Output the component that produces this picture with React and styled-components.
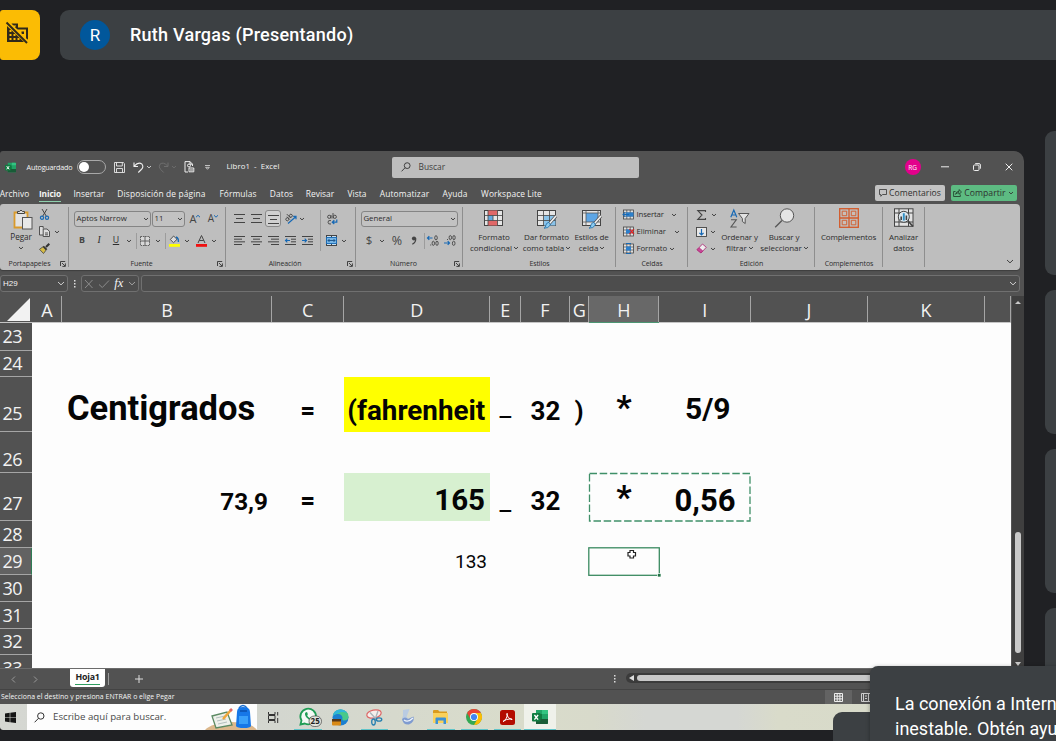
import React from "react";
import styled, { createGlobalStyle } from "styled-components";

const Global = createGlobalStyle`
  * { box-sizing: border-box; }
  html, body { margin: 0; height: 100%; overflow: hidden; background: #202124; }
  body { font-family: "Open Sans", "Noto Sans", sans-serif; }
  svg { display: block; flex: none; overflow: visible; }
`;

/* ---------- meeting shell ---------- */
const Meeting = styled.div`
  position: relative;
  width: 1056px; height: 741px; overflow: hidden;
  display: flex; flex-direction: column;
  padding-top: 10px;
  background: #202124;
`;
const MeetingHeader = styled.header`
  display: flex; gap: 20px; height: 50px; flex: none;
`;
const Warning = styled.div`
  width: 40px; height: 50px; border-radius: 3px 8px 8px 3px; background: #fbbc04;
  display: flex; align-items: flex-start; padding: 10px 0 0 5px;
`;
const Presenter = styled.div`
  flex: 1; display: flex; align-items: center; padding-left: 20px;
  background: #3c4043; border-radius: 9px 0 0 9px; color: #fff;
  font: 500 18px/24px Roboto, sans-serif;
`;
const Avatar = styled.span`
  width: 30px; height: 30px; border-radius: 50%; margin-right: 20px;
  background: #01579b; display: flex; align-items: center; justify-content: center;
  font: 400 17px/30px Roboto, sans-serif;
`;
const PresenterName = styled.span`letter-spacing: 0.24px; white-space: nowrap;`;
const Stage = styled.main`display: flex; padding-top: 91px; flex: none;`;
const Tiles = styled.aside`
  display: flex; flex-direction: column; gap: 15px; margin: -20px 0 0 21px;
  width: 11px; flex: none; height: 600px;
`;
const Tile = styled.div`
  height: 144px; flex: none; width: 30px; background: #3c4043; border-radius: 9px 0 0 9px;
`;
const Toast = styled.div`
  position: absolute; left: 870px; top: 666px; width: 220px; height: 90px;
  background: #3c4043; border-radius: 8px; color: #fff; padding: 25px 0 0 25px;
  font: 400 18px/25px Roboto, sans-serif; white-space: nowrap;
  box-shadow: 0 1px 4px rgba(0,0,0,.35);
`;
const Bubble = styled.div`
  position: absolute; left: 833px; top: 712px; width: 80px; height: 50px;
  background: #3c4043; border-radius: 9px;
`;

/* ---------- excel window ---------- */
const Excel = styled.section`
  width: 1024px; height: 579px; flex: none; overflow: hidden;
  border-radius: 3px 10px 0 3px; background: #525252; color: #f4f4f4;
  display: flex; flex-direction: column;
`;
const Txt = styled.span`
  white-space: nowrap; font-size: ${p => p.$s || 8}px; line-height: 1.25;
  letter-spacing: ${p => p.$ls || 0}px; font-weight: ${p => p.$wt || 400};
  color: ${p => p.$c || "inherit"}; font-family: ${p => p.$f || "inherit"};
  font-style: ${p => p.$i ? "italic" : "normal"};
  text-decoration: ${p => p.$u ? "underline" : "none"};
`;
const Slot = styled.div`
  width: ${p => p.$w}px; margin-left: ${p => p.$ml || 0}px; flex: none;
  display: flex; align-items: center; white-space: nowrap;
  justify-content: ${p => p.$start ? "flex-start" : "center"};
`;
const TitleBar = styled.div`display: flex; align-items: center; height: 32px; flex: none;`;
const Toggle = styled.span`
  width: 29px; height: 14px; border: 1px solid #a8a8a8; border-radius: 7px; padding: 1px;
  display: flex; align-items: center; margin-left: 4.5px; flex: none;
  &::before { content: ""; width: 10px; height: 10px; border-radius: 50%; background: #fff; }
`;
const Search = styled.div`
  width: 247px; height: 21px; margin-left: 111.5px; background: #bdbdbd; border-radius: 2px;
  display: flex; align-items: center; gap: 8px; padding-left: 9px; color: #3d3d3d; flex: none;
`;
const UserDot = styled.span`
  width: 16px; height: 16px; border-radius: 50%; background: #e3008c; color: #fff;
  margin-left: 266px; font-size: 6.5px; display: flex; align-items: center; justify-content: center; flex: none;
`;
const Menu = styled.nav`display: flex; height: 21px; flex: none;`;
const MenuItem = styled.div`
  width: ${p => p.$w}px; margin-left: ${p => p.$ml}px; flex: none; height: 19px;
  display: flex; justify-content: center; white-space: nowrap;
  font-size: 8.4px; line-height: 21px; letter-spacing: ${p => p.$ls || 0}px;
  font-weight: ${p => p.$on ? 700 : 500};
  border-bottom: ${p => p.$on ? "1.5px solid #8fd0ae" : "0"};
`;
const MenuButton = styled.div`
  width: ${p => p.$w}px; height: 16px; margin: 2px 0 0 ${p => p.$ml}px; border-radius: 2px;
  background: ${p => p.$bg}; color: #2f2f2f; display: flex; align-items: center; justify-content: center; gap: 2px; flex: none;
`;
const Ribbon = styled.div`
  display: flex; width: 1020px; height: 66px; flex: none; background: #bebebe; color: #2d2d2d;
  border-radius: 3px 4px 4px 3px; box-shadow: 0 1px 1px #3d3d3d;
`;
const Group = styled.div`
  position: relative; width: ${p => p.$w}px; flex: none; display: flex; flex-direction: column;
  &::after {
    content: ""; position: absolute; right: 0; top: 3px; bottom: 3px; width: 1px; background: #8e8e8e;
  }
`;
const GroupBody = styled.div`height: 53px; display: flex; flex: none;`;
const GroupFoot = styled.div`
  height: 13px; display: flex; align-items: center; justify-content: center;
  padding-right: ${p => p.$pr || 0}px; font-size: 7px; line-height: 13px; letter-spacing: ${p => p.$ls || 0}px; white-space: nowrap;
`;
const Launcher = styled.span`position: absolute; right: 3px; bottom: 3px;`;
const Collapse = styled.span`
  flex: 1; display: flex; align-items: flex-end; justify-content: flex-end; padding: 0 7px 7px 0;
`;
const Stack = styled.div`
  display: flex; flex-direction: column; flex: none; width: ${p => p.$w}px;
  padding-top: ${p => p.$pt || 0}px; align-items: ${p => p.$start ? "flex-start" : "center"};
`;
const Row = styled.div`
  display: flex; align-items: center; flex: none; height: ${p => p.$h || 17}px;
  padding-left: ${p => p.$pl || 0}px; margin-bottom: ${p => p.$mb || 0}px;
`;
const Combo = styled.div`
  width: ${p => p.$w}px; height: 16px; border: 1px solid #858585; border-radius: 3px; flex: none;
  display: flex; align-items: center; justify-content: space-between; padding: 0 2px 0 1.5px;
  margin-right: ${p => p.$mr || 0}px; background: #c2c2c2;
`;
const Pressed = styled.span`
  width: 16px; height: 17px; border: 1px solid #8a8a8a; border-radius: 3px; background: #d0d0d0;
  display: flex; align-items: center; justify-content: center; padding-top: 2px;
`;
const Rule = styled.span`width: 1px; height: ${p => p.$h || 16}px; background: #9c9c9c; flex: none;`;
const Caption = styled.div`
  display: flex; align-items: center; justify-content: center; gap: 2px; height: 10.5px;
  font-size: 8px; line-height: 10.5px; letter-spacing: ${p => p.$ls || 0}px; white-space: nowrap;
`;
const IconBox = styled.div`height: 28px; display: flex; align-items: center;`;

const FormulaBar = styled.div`
  display: flex; align-items: center; height: 26px; flex: none; padding-top: 1px;
`;
const Field = styled.div`
  width: ${p => p.$w}px; height: 17px; border: 1px solid #707070; border-radius: 3px; flex: none;
  margin-left: ${p => p.$ml || 0}px; padding: 0 3px 0 2px; background: #4d4d4d;
  display: flex; align-items: center; justify-content: space-between;
`;

/* ---------- sheet ---------- */
const COLS = "32px 30px 210px 71.5px 146.5px 30.5px 49px 19.5px 70px 91.5px 117px 117px 26.5px";
const Sheet = styled.div`display: flex; height: 372px; flex: none;`;
const SheetMain = styled.div`width: 1011px; flex: none; position: relative; overflow: hidden; background: #fdfdfd;`;
const ColHeads = styled.div`
  display: grid; grid-template-columns: ${COLS}; height: 27px; background: #525252;
  border-bottom: 1px solid #c5c5c5;
`;
const ColHead = styled.div`
  display: flex; align-items: center; justify-content: center; padding: 1px 0 0 1px;
  font: 400 18px/22px "Open Sans", sans-serif; color: #f2f2f2;
  border-right: 1px solid #a5a5a5;
  ${p => p.$on && "background: #686868; box-shadow: 0 1px 0 #4c9673;"}
`;
const Corner = styled.div`display: flex; justify-content: flex-end; align-items: flex-end; padding: 0 2px 1px 0;`;
const Line = styled.div`display: grid; grid-template-columns: ${COLS}; height: ${p => p.$h}px;`;
const RowHead = styled.div`
  background: ${p => p.$on ? "#626262" : "#525252"}; border-bottom: 1px solid #a5a5a5;
  ${p => p.$on && "border-right: 1px solid #2f7c55;"}
  display: flex; align-items: flex-end; padding: 0 0 ${p => p.$pb ?? 0}px 2.5px; overflow: hidden;
  font: 400 18px/25px "Open Sans", sans-serif; letter-spacing: -0.5px; color: #f2f2f2;
`;
const Cell = styled.div`
  grid-column: ${p => p.$col}; grid-row: 1; display: flex; align-items: flex-end; white-space: nowrap;
  justify-content: ${p => p.$end ? "flex-end" : p.$start ? "flex-start" : "center"};
  background: ${p => p.$bg || "transparent"}; color: #050505;
  padding: 0 ${p => p.$pr || 0}px ${p => p.$b - p.$s * 0.158}px ${p => p.$pl || 0}px;
  font: ${p => p.$n ? 400 : 700} ${p => p.$s}px/1 Roboto, sans-serif;
`;
const Overlay = styled.svg`position: absolute; left: ${p => p.$x}px; top: ${p => p.$y}px;`;
const VScroll = styled.div`
  width: 13px; background: #3f3f3f; display: flex; flex-direction: column; align-items: center;
  padding: 4px 0 2px; gap: 9px; flex: none; border-left: 1px solid #555;
`;
const Thumb = styled.span`width: 6px; height: 121px; border-radius: 3px; background: #c8c8c8; margin-top: auto;`;

const SheetTabs = styled.div`display: flex; height: 21px; flex: none; border-top: 1px solid #6b6b6b; align-items: flex-start;`;
const SheetTab = styled.div`
  width: 35px; height: 18px; margin-left: 28px; background: #fff; border-radius: 0 0 3px 3px; color: #222;
  display: flex; justify-content: center; font: 700 8.8px/17px "Open Sans", sans-serif; letter-spacing: -0.2px;
`;
const TabName = styled.span`height: 16px; border-bottom: 1.5px solid #2f9e60;`;
const HScroll = styled.div`
  flex: 1; height: 10px; margin: 4px 0 0 10px; background: #3b3b3b; border-radius: 5px 0 0 5px;
  display: flex; align-items: center; gap: 3px; padding-left: 3px;
`;
const HThumb = styled.span`flex: 1; height: 6px; border-radius: 3px; background: #c8c8c8;`;
const Status = styled.div`
  display: flex; height: 15px; flex: none; align-items: center; padding-left: 1px; border-top: 1px solid #434343;
`;
const ViewBtn = styled.span`
  width: 27px; height: 14px; background: ${p => p.$on ? "#636363" : "transparent"};
  display: flex; align-items: center; justify-content: center;
`;
const Taskbar = styled.footer`
  display: flex; height: 26px; flex: none; background: linear-gradient(90deg, #d5d7d2 0, #d3d6cf 27%, #d9dccb 50%, #d8dacb 58%, #d5d7d3 63%, #d5d7d3 72%, #d9dbca 76%, #d6d9c9 100%);
  border-radius: 0 0 0 3px;
`;
const TaskSearch = styled.div`
  width: 230px; background: #fdfdfd; display: flex; align-items: center; padding-left: 7px; color: #4a4a4a;
`;
const TaskApp = styled.div`
  width: ${p => p.$w}px; flex: none; display: flex; align-items: center; justify-content: center;
  background: ${p => p.$active ? "#eff1ea" : "transparent"};
  box-shadow: ${p => p.$run ? "inset 0 -1px 0 #5fc4c9" : "none"};
  margin-left: ${p => p.$ml || 0}px;
`;

/* ---------- icons ---------- */
const Chev = ({ w = 4, c = "#333", sw = 0.9 }) => (
  <svg width={w} height={w / 2} viewBox="0 0 4 2"><path d="M0 0L2 1.9L4 0" fill="none" stroke={c} strokeWidth={sw * 4 / w} /></svg>
);
const Dots = () => (
  <svg width="2" height="8" fill="#ddd"><path d="M0 0h1.5v1.5H0zM0 3h1.5v1.5H0zM0 6h1.5v1.5H0z" /></svg>
);
const SearchIcon = ({ s = 11, c = "#333" }) => (
  <svg width={s} height={s} viewBox="0 0 11 11" fill="none" stroke={c}><circle cx="6.8" cy="4" r="3.2" /><path d="M4.5 6.3L.6 10.3" /></svg>
);
const ExcelIcon = ({ s = 12 }) => (
  <svg width={s} height={s} viewBox="0 0 16 16">
    <path d="M4 1h11q1 0 1 1v12q0 1-1 1H4z" fill="#21a366" /><path d="M10 1h5q1 0 1 1v3h-6z" fill="#33c481" />
    <path d="M4 5h6v5H4z" fill="#107c41" /><path d="M4 10h12v4q0 1-1 1H4z" fill="#185c37" /><path d="M10 5h6v5h-6z" fill="#21a366" />
    <rect y="4" width="8.5" height="8.5" rx="1" fill="#107c41" /><path d="M2.4 6l3.7 4.6M6.1 6L2.4 10.6" stroke="#fff" strokeWidth="1.4" />
  </svg>
);
const Lines = ({ xs }) => (
  <svg width="11" height="9" viewBox="0 0 11 9" stroke="#444" strokeWidth="1">
    {xs.map(([a, b], i) => <path key={i} d={`M${a} ${i * (8 / (xs.length - 1)) + 0.5}H${b}`} />)}
  </svg>
);
const Indent = ({ right }) => (
  <svg width="11" height="9" viewBox="0 0 11 9" stroke="#444" fill="none">
    <path d="M0 .5H11M6 3.2H11M6 5.8H11M0 8.5H11" />
    <path d={right ? "M0 4.5H4.5M2.7 2.7L4.5 4.5L2.7 6.3" : "M5 4.5H.5M2.3 2.7L.5 4.5L2.3 6.3"} stroke="#1769b5" strokeWidth="1.1" />
  </svg>
);
const Launch = () => (
  <svg width="6" height="6" viewBox="0 0 6 6" fill="none" stroke="#333" strokeWidth=".9"><path d="M.5 5V.5H5.2M2 2L5 5M5.4 2.4V5.4H2.4" /></svg>
);
const Table = ({ kind }) => (
  <svg width="20" height="18" viewBox="0 0 20 18" fill="none">
    <rect x=".5" y="1.5" width="18" height="15" fill="#e5e5e5" stroke="#444" />
    {kind === "cond" && <g><path d="M4 1.5h9.5v5H4zM4 11.5h9.5v5H4z" fill="#e06767" /><path d="M4 6.5h5v5H4z" fill="#63a9df" /></g>}
    {kind === "table" && <path d="M7 6.5h11.5v10H7z" fill="#8ac3ea" />}
    {kind === "style" && <path d="M4 4h12v9H4z" fill="#5da5e4" />}
    {kind === "style"
      ? <path d="M4 1.5v15M.5 4H18.5M.5 13H18.5M16 1.5V13" stroke="#555" strokeWidth=".8" />
      : <path d={kind === "cond" ? "M4 1.5v15M9 6.5v5M13.5 1.5v15M.5 6.5h18M.5 11.5h18" : "M6.5 1.5v15M12.5 1.5v15M.5 6.5h18M.5 11.5h18"} stroke="#444" strokeWidth=".8" />}
    {kind !== "cond" && <g><path d="M19 7L12 15" stroke="#555" strokeWidth="3" /><path d="M19 7L12.5 14.5" stroke="#f2f2f2" strokeWidth="1.6" />
      <path d="M11.5 13.5q2 .5 1.8 2.5q-2 3.5-6.3 3.2q2-1 1.8-2.8q.4-2.5 2.7-2.9z" fill="#8ccbf0" stroke="#1c6ca8" strokeWidth=".8" /></g>}
  </svg>
);
const CellsIcon = ({ kind }) => (
  <svg width="11" height="11" viewBox="0 0 11 11" fill="none">
    <rect x=".5" y="1" width="10" height="9" fill="#e0e0e0" stroke="#444" strokeWidth=".8" />
    <path d="M3.8 1v9M7.2 1v9M.5 4h10M.5 7h10" stroke="#444" strokeWidth=".7" />
    <rect x="3" y="3.4" width={kind === "ins" ? 7.5 : 5} height="4.2" fill="#2c7fcb" />
    {kind === "ins" && <path d="M6 5.5H0M2.3 3L0 5.5L2.3 8" stroke="#1769b5" strokeWidth="1.1" />}
    {kind === "del" && <path d="M6.5 3.2L11 8M11 3.2L6.5 8" stroke="#d22" strokeWidth="1.2" />}
    {kind === "fmt" && <path d="M3 .5h5M3 10.5h5" stroke="#1769b5" />}
  </svg>
);
const OffIcon = () => (
  <svg width="23" height="24" viewBox="0 0 23 24">
    <path d="M6.5 4.5H12V8.5H22V19.5" fill="none" stroke="#30291a" strokeWidth="2" />
    <path d="M2 6L19 22H2z" fill="#30291a" />
    <g fill="#fbbc04"><path d="M4.5 10h2v2h-2zM4.5 14h2v2h-2zM8.5 14h2v2h-2zM4.5 18h2v2h-2zM8.5 18h2v2h-2zM12.5 18h2v2h-2z" /></g>
    <path d="M11 6.5V10" stroke="#30291a" strokeWidth="2" /><path d="M16.5 11.5h2.5v2.5h-2.5z" fill="#30291a" />
    <path d="M3 1.5L23.5 22" stroke="#fbbc04" strokeWidth="1.8" /><path d="M1.5 2.5L22 23" stroke="#30291a" strokeWidth="2" />
  </svg>
);

const MENU = [
  ["Archivo", 30, -0.5, 0.05], ["Inicio", 22, 9.5, -0.15, true], ["Insertar", 32, 12, 0.05], ["Disposición de página", 90, 11.5, 0.15],
  ["Fórmulas", 38, 12.5, 0.1], ["Datos", 24, 12.5, 0.15], ["Revisar", 29, 12, 0.05], ["Vista", 19, 13, 0.1],
  ["Automatizar", 50, 13, 0.15], ["Ayuda", 25, 13, 0.1], ["Workspace Lite", 61, 13.5, 0.1],
];
const full = [[0, 11], [2, 9], [0, 11]];

function TitleRow() {
  return (
    <TitleBar>
      <Slot $w={11} $ml={5}><ExcelIcon s={11} /></Slot>
      <Slot $w={46} $ml={10.5}><Txt $s={7.2} $ls={-0.2} $wt={500}>Autoguardado</Txt></Slot>
      <Toggle />
      <Slot $w={11} $ml={7.5}>
        <svg width="11" height="11" viewBox="0 0 11 11" fill="none" stroke="#e8e8e8" strokeWidth=".9"><path d="M.5.5H9.3L10.5 1.7V10.5H.5zM2.5.5V4H8.3V.5M2.5 10.5V6.5H8.5V10.5" /></svg>
      </Slot>
      <Slot $w={12} $ml={7.5}>
        <svg width="11" height="11" viewBox="0 0 11 11" fill="none" stroke="#eee" strokeWidth="1.1"><path d="M1 .5V4.5H5M1.2 4.2Q5.5-.7 9 2.2Q11 5 8.3 7.5L5.3 10.5" /></svg>
      </Slot>
      <Slot $w={6} $ml={1.5}><Chev c="#ddd" /></Slot>
      <Slot $w={12} $ml={6}>
        <svg width="11" height="11" viewBox="0 0 11 11" fill="none" stroke="#6e6e6e" strokeWidth="1"><path d="M10 .5V4.5H6M9.8 4.2Q5.5-.7 2 2.2Q0 5 2.7 7.5L5.7 10.5" /></svg>
      </Slot>
      <Slot $w={6} $ml={1}><Chev c="#6e6e6e" /></Slot>
      <Slot $w={11} $ml={7}>
        <svg width="11" height="12" viewBox="0 0 11 12" fill="none" stroke="#eee" strokeWidth="1"><path d="M4 11H1V.6H6L8.5 3.2V5M6 .6V3.2H8.5" /><circle cx="5" cy="4.5" r="1.5" /><path d="M5 7H9.8V10.8H5z" /><path d="M6 9H9" /></svg>
      </Slot>
      <Slot $w={6} $ml={9.5}><svg width="5" height="5" viewBox="0 0 5 5" fill="none" stroke="#ddd"><path d="M0 .5H5M.7 2.3L2.5 4.3L4.3 2.3z" strokeWidth=".8" /></svg></Slot>
      <Slot $w={54} $ml={16}><Txt $s={7.8} $ls={0.05}>Libro1&nbsp; -&nbsp; Excel</Txt></Slot>
      <Search><SearchIcon s={10} /><Txt $s={8.4}>Buscar</Txt></Search>
      <UserDot>RG</UserDot>
      <Slot $w={8} $ml={20}><svg width="8" height="2"><path d="M0 .8H8" stroke="#eee" /></svg></Slot>
      <Slot $w={8} $ml={24}><svg width="8" height="8" viewBox="0 0 8 8" fill="none" stroke="#eee"><rect x=".5" y="2" width="5.5" height="5.5" rx="1" /><path d="M2.2.6H6Q7.4.6 7.4 2V5.7" /></svg></Slot>
      <Slot $w={8} $ml={24.5}><svg width="8" height="8" viewBox="0 0 8 8" stroke="#eee"><path d="M.7.7L7.3 7.3M7.3.7L.7 7.3" /></svg></Slot>
    </TitleBar>
  );
}

function RibbonRow() {
  return (
    <Ribbon>
      <Group $w={69}>
        <GroupBody>
          <Stack $w={34} $pt={3}>
            <Row $h={25} $pl={12}>
              <svg width="20" height="21" viewBox="0 0 20 21" fill="none">
                <path d="M3 3.5H14.5V18.5H1.5V3.5z" fill="#e3e3e3" stroke="#d99a2b" strokeWidth="1.8" /><path d="M4.5 4.5V2.5H6.5Q8-.5 9.5 2.5H11.5V4.5z" fill="#ddd" stroke="#444" />
                <rect x="9.5" y="8.5" width="9.5" height="11.5" fill="#e8e8e8" stroke="#555" />
              </svg>
            </Row>
            <Row $h={11} $pl={8}><Txt $s={8.2} $ls={-0.1}>Pegar</Txt></Row>
            <Row $h={9} $pl={8}><Chev /></Row>
          </Stack>
          <Stack $w={32} $pt={2} $start>
            <Row $pl={6}>
              <svg width="9" height="11" viewBox="0 0 9 11" fill="none"><path d="M2 0L6.2 7M7 0L2.8 7" stroke="#444" /><circle cx="2" cy="8.7" r="1.6" stroke="#1769b5" strokeWidth="1.2" /><circle cx="7" cy="8.7" r="1.6" stroke="#1769b5" strokeWidth="1.2" /></svg>
            </Row>
            <Row $pl={5}>
              <svg width="11" height="11" viewBox="0 0 11 11" fill="#ddd" stroke="#444" strokeWidth=".9"><path d="M4 9H.5V.5H4.2V2.5" /><path d="M4.2 3H8L10.5 5.3V10.5H4.2zM6 7H9M6 8.8H9" /></svg>
              <Slot $w={10} $ml={2}><Chev /></Slot>
            </Row>
            <Row $pl={5}>
              <svg width="11" height="11" viewBox="0 0 11 11"><path d="M10.3.7L7 4" stroke="#333" strokeWidth="2" /><path d="M.5 6.3L4.8 3.2L7.8 6.2L4.5 10.5z" fill="#d7bc45" stroke="#444" strokeWidth=".8" /><path d="M4.3 3.5L7.4 6.6" stroke="#333" strokeWidth="1.6" /></svg>
            </Row>
          </Stack>
        </GroupBody>
        <GroupFoot $pr={10} $ls={-0.1}>Portapapeles</GroupFoot><Launcher><Launch /></Launcher>
      </Group>

      <Group $w={157}>
        <GroupBody>
          <Stack $w={155} $pt={6} $start>
            <Row $pl={5} $mb={5}>
              <Combo $w={77} $mr={1}><Txt $s={7.9} $ls={-0.05}>Aptos Narrow</Txt><Chev /></Combo>
              <Combo $w={33}><Txt $s={7.8}>11</Txt><Chev /></Combo>
              <Slot $w={20}><Txt $s={11} $c="#444">A</Txt><svg width="4" height="8" viewBox="0 0 4 8"><path d="M0 2.2L2 .3L4 2.2" fill="none" stroke="#1769b5" /></svg></Slot>
              <Slot $w={16}><Txt $s={10} $c="#444">A</Txt><svg width="4" height="8" viewBox="0 0 4 8"><path d="M0 .3L2 2.2L4 .3" fill="none" stroke="#1769b5" /></svg></Slot>
            </Row>
            <Row $pl={5}>
              <Slot $w={16}><Txt $s={8.8} $wt={700} $c="#444">B</Txt></Slot>
              <Slot $w={18}><Txt $s={9.5} $i $f="'Liberation Serif'">I</Txt></Slot>
              <Slot $w={16}><Txt $s={8.8} $u>U</Txt></Slot>
              <Slot $w={10}><Chev /></Slot><Slot $w={4}><Rule /></Slot>
              <Slot $w={14}><svg width="10" height="10" viewBox="0 0 10 10" fill="#d8d8d8" stroke="#555" strokeWidth=".9"><rect x=".5" y=".5" width="9" height="9" strokeDasharray="1.5 .8" /><path d="M5 0V10M0 5H10" /></svg></Slot>
              <Slot $w={12}><Chev /></Slot><Slot $w={2}><Rule /></Slot>
              <Slot $w={17}><svg width="11" height="12" viewBox="0 0 11 12"><path d="M4.6 1L8 4.3L4.5 7.7L1.3 4.5z" fill="#ddd" stroke="#444" strokeWidth=".9" /><path d="M7 2Q9.7 3 9.4 7" fill="none" stroke="#1769b5" strokeWidth="1.4" /><rect y="9" width="11" height="2.8" fill="#ff0" /></svg></Slot>
              <Slot $w={7}><Chev /></Slot>
              <Slot $w={22}><svg width="11" height="12" viewBox="0 0 11 12"><path d="M2 8L5.5.5L9 8M3.3 5.5H7.7" fill="none" stroke="#444" /><rect y="9" width="11" height="2.8" fill="#f01010" /></svg></Slot>
              <Slot $w={4}><Chev /></Slot>
            </Row>
          </Stack>
        </GroupBody>
        <GroupFoot $pr={12} $ls={-0.1}>Fuente</GroupFoot><Launcher><Launch /></Launcher>
      </Group>

      <Group $w={130}>
        <GroupBody>
          <Stack $w={94} $pt={6} $start>
            <Row $pl={5} $mb={5}>
              <Slot $w={16}><Row $h={13}><Lines xs={full} /></Row></Slot>
              <Slot $w={18}><Lines xs={full} /></Slot>
              <Slot $w={16}><Pressed><Lines xs={full} /></Pressed></Slot>
              <Slot $w={20}><svg width="12" height="12" viewBox="0 0 12 12" fill="none"><g transform="rotate(-45 5 5)" stroke="#444" strokeWidth=".9"><circle cx="2.2" cy="4" r="1.5" /><path d="M3.8 2V6M5.5 0V5.5" /><circle cx="7.2" cy="4" r="1.5" /></g><path d="M3 10.5L11 3.5M8.2 3.4H11V6.2" stroke="#1769b5" strokeWidth="1.2" /></svg></Slot>
              <Slot $w={2}><Chev /></Slot>
            </Row>
            <Row $pl={5}>
              <Slot $w={16}><Lines xs={[[0, 11], [0, 8], [0, 11], [0, 8]]} /></Slot>
              <Slot $w={18}><Lines xs={[[0, 11], [2, 9], [0, 11], [2, 9]]} /></Slot>
              <Slot $w={16}><Lines xs={[[0, 11], [3, 11], [0, 11], [3, 11]]} /></Slot>
              <Slot $w={18}><Indent /></Slot>
              <Slot $w={17}><Indent right /></Slot>
            </Row>
          </Stack>
          <Row $h={52}><Rule $h={41} /></Row>
          <Stack $w={30} $pt={6} $start>
            <Row $pl={3} $mb={5}><Slot $w={17}>
              <svg width="11" height="12" viewBox="0 0 11 12" fill="none" stroke="#444" strokeWidth=".9"><circle cx="2.2" cy="3.8" r="1.6" /><path d="M4 2V5.6M6 0V5.5" /><circle cx="7.8" cy="3.8" r="1.6" /><path d="M4 7.6Q1 6.8 1 9.2T4 11" /><path d="M9.8 6.5V9.2H5.5M7.3 7.3L5.3 9.2L7.3 11" stroke="#1769b5" strokeWidth="1.2" /></svg>
            </Slot></Row>
            <Row $pl={2}><Slot $w={17}>
              <svg width="11" height="11" viewBox="0 0 11 11" fill="none"><rect x=".5" y=".5" width="10" height="10" fill="#c9dff0" stroke="#444" /><path d="M5.5 0V2.5M5.5 8.5V11" stroke="#444" /><rect x=".5" y="2.5" width="10" height="6" fill="#78b6e6" stroke="#1769b5" strokeWidth=".9" /><path d="M2 5.5H9M3.5 4L2 5.5L3.5 7M7.5 4L9 5.5L7.5 7" stroke="#174f85" strokeWidth=".9" /></svg>
            </Slot><Slot $w={8}><Chev /></Slot></Row>
          </Stack>
        </GroupBody>
        <GroupFoot $pr={12} $ls={-0.1}>Alineación</GroupFoot><Launcher><Launch /></Launcher>
      </Group>

      <Group $w={107}>
        <GroupBody>
          <Stack $w={106} $pt={6} $start>
            <Row $pl={5} $mb={5}><Combo $w={97}><Txt $s={7.8} $ls={-0.05}>General</Txt><Chev /></Combo></Row>
            <Row $pl={6}>
              <Slot $w={14}><Txt $s={11.5} $c="#444">$</Txt></Slot><Slot $w={12}><Chev /></Slot>
              <Slot $w={18}><Txt $s={12.5} $c="#444">%</Txt></Slot>
              <Slot $w={16}><svg width="6" height="9" viewBox="0 0 6 9"><circle cx="3" cy="2.5" r="2.1" fill="#444" /><path d="M4.8 2.5Q4.8 6.5 1.3 8.3" fill="none" stroke="#444" strokeWidth="1.2" /></svg></Slot>
              <Slot $w={4}><Rule /></Slot>
              {[0, 1].map(k => (
                <Slot key={k} $w={k ? 20 : 14}><svg width="12" height="11" viewBox="0 0 12 11" fill="none" stroke="#444" strokeWidth=".9">
                  <path d={k ? "M0 8H5.5M3.7 6.2L5.5 8L3.7 9.8" : "M5.5 3H.5M2.3 1.2L.5 3L2.3 4.8"} stroke="#1769b5" strokeWidth="1.2" />
                  {!k && <><ellipse cx="9" cy="2.8" rx="1.3" ry="2.1" /><ellipse cx="6.3" cy="8.3" rx="1.2" ry="2.1" /><ellipse cx="10" cy="8.3" rx="1.2" ry="2.1" /><path d="M3.2 10H4.2" /></>}
                  {!!k && <><ellipse cx="6.3" cy="2.6" rx="1.2" ry="2.1" /><ellipse cx="10" cy="2.6" rx="1.2" ry="2.1" /><ellipse cx="9.7" cy="8.3" rx="1.3" ry="2.1" /><path d="M3 4.5H4" /></>}
                </svg></Slot>
              ))}
            </Row>
          </Stack>
        </GroupBody>
        <GroupFoot $pr={12} $ls={0}>Número</GroupFoot><Launcher><Launch /></Launcher>
      </Group>

      <Group $w={153}>
        <GroupBody>
          <Stack $w={62}><IconBox><Table kind="cond" /></IconBox><Caption>Formato</Caption><Caption $ls={-0.05}>condicional <Chev /></Caption></Stack>
          <Stack $w={43}><IconBox><Table kind="table" /></IconBox><Caption $ls={-0.1}>Dar formato</Caption><Caption>como tabla <Chev /></Caption></Stack>
          <Stack $w={47}><IconBox><Table kind="style" /></IconBox><Caption $ls={-0.1}>Estilos de</Caption><Caption>celda <Chev /></Caption></Stack>
        </GroupBody>
        <GroupFoot $ls={-0.1}>Estilos</GroupFoot>
      </Group>

      <Group $w={72}>
        <GroupBody>
          <Stack $w={70} $pt={2} $start>
            <Row $pl={7}><CellsIcon kind="ins" /><Slot $w={35} $ml={2.5} $start><Txt $s={7.8} $ls={-0.15}>Insertar</Txt></Slot><Chev /></Row>
            <Row $pl={7}><CellsIcon kind="del" /><Slot $w={38} $ml={2.5} $start><Txt $s={7.8} $ls={-0.05}>Eliminar</Txt></Slot><Chev /></Row>
            <Row $pl={7}><CellsIcon kind="fmt" /><Slot $w={33} $ml={2.5} $start><Txt $s={7.8} $ls={-0.05}>Formato</Txt></Slot><Chev /></Row>
          </Stack>
        </GroupBody>
        <GroupFoot $ls={-0.1}>Celdas</GroupFoot>
      </Group>

      <Group $w={127}>
        <GroupBody>
          <Stack $w={28} $pt={2} $start>
            <Row $pl={9}><svg width="9" height="10" viewBox="0 0 9 10" fill="none" stroke="#444" strokeWidth="1.1"><path d="M8.5 2V.6H.8L5 5L.8 9.4H8.5V8" /></svg><Slot $w={4} $ml={6}><Chev /></Slot></Row>
            <Row $pl={7.5}><svg width="11" height="10" viewBox="0 0 11 10" fill="#e8e8e8" stroke="#444" strokeWidth=".9"><rect x=".5" y=".5" width="10" height="9" /><path d="M5.5 2V8M3.4 5.8L5.5 8L7.6 5.8" fill="none" stroke="#1769b5" strokeWidth="1.2" /></svg><Slot $w={4} $ml={4}><Chev /></Slot></Row>
            <Row $pl={7.5}><svg width="11" height="11" viewBox="0 0 11 11" stroke="#b0317b" strokeWidth=".9"><path d="M6.5 1L10.3 4.3L5 10L1 6.7z" fill="#eee" /><path d="M3 4.7L6.8 8L5 10L1 6.7z" fill="#c9479a" /></svg><Slot $w={4} $ml={4}><Chev /></Slot></Row>
          </Stack>
          <Stack $w={47}><IconBox>
            <svg width="20" height="19" viewBox="0 0 20 19" fill="none"><path d="M.8 8.3L3.8 1L6.8 8.3M1.8 6H5.8" stroke="#1769b5" strokeWidth="1.2" /><path d="M1 10.8H6.3L1 18H6.6" stroke="#555" strokeWidth="1.1" /><path d="M8.5 4.5H19L15.2 9.5V14.5L12.4 12.5V9.5z" fill="#e2e2e2" stroke="#555" /></svg>
          </IconBox><Caption $ls={-0.1}>Ordenar y</Caption><Caption>filtrar <Chev /></Caption></Stack>
          <Stack $w={42}><IconBox>
            <svg width="20" height="20" viewBox="0 0 20 20" fill="none" stroke="#555"><circle cx="13" cy="7.5" r="6.7" fill="#e5e5e5" /><path d="M8 12.5L1.2 19.3" strokeWidth="1.3" /></svg>
          </IconBox><Caption $ls={-0.1}>Buscar y</Caption><Caption $ls={-0.05}>seleccionar <Chev /></Caption></Stack>
        </GroupBody>
        <GroupFoot>Edición</GroupFoot>
      </Group>

      <Group $w={68}>
        <GroupBody><Stack $w={67}><IconBox>
          <svg width="20" height="20" viewBox="0 0 20 20" fill="none" stroke="#d45a2a" strokeWidth="1.3"><rect x=".7" y=".7" width="18.6" height="18.6" /><path d="M10 .7V19.3M.7 10H19.3" /><path d="M3.2 3.2H7.7V7.7H3.2zM12.3 3.2H16.8V7.7H12.3zM3.2 12.3H7.7V16.8H3.2zM12.3 12.3H16.8V16.8H12.3z" strokeWidth=".9" fill="#c9beb8" /></svg>
        </IconBox><Caption $ls={-0.15}>Complementos</Caption></Stack></GroupBody>
        <GroupFoot $ls={-0.1}>Complementos</GroupFoot>
      </Group>

      <Group $w={42}>
        <GroupBody><Stack $w={41}><IconBox>
          <svg width="20" height="20" viewBox="0 0 20 20" fill="none"><rect x=".5" y=".8" width="18.5" height="17.5" fill="#e3e3e3" stroke="#444" /><path d="M.5 5H19M.5 14H19M5 .8V18.3M14.5 .8V18.3" stroke="#444" /><circle cx="9.8" cy="8.8" r="5.5" fill="#dce7ee" stroke="#444" /><path d="M7.2 12V8.5M12.4 12V7.5" stroke="#444" strokeWidth="1.6" /><path d="M9.8 12.5V5.2" stroke="#2f8fc5" strokeWidth="1.9" /><path d="M14 13L19 18.5" stroke="#444" strokeWidth="1.8" /></svg>
        </IconBox><Caption $ls={-0.1}>Analizar</Caption><Caption $ls={-0.1}>datos</Caption></Stack></GroupBody>
      </Group>
      <Collapse><Chev w={6} /></Collapse>
    </Ribbon>
  );
}

function Grid() {
  return (
    <Sheet>
      <SheetMain>
        <ColHeads>
          <Corner><svg width="23" height="23" viewBox="0 0 23 23"><path d="M23 0V23H0z" fill="#f2f2f2" /></svg></Corner>
          {["A", "B", "C", "D", "E", "F", "G", "H", "I", "J", "K", ""].map((c, i) => <ColHead key={i} $on={c === "H"}>{c}</ColHead>)}
        </ColHeads>
        <Line $h={27.5}><RowHead $pb={1}>23</RowHead></Line>
        <Line $h={26.5}><RowHead>24</RowHead></Line>
        <Line $h={54.5}>
          <RowHead $pb={5}>25</RowHead>
          <Cell $col={3} $s={34.5} $b={11} $start $pl={5}>Centigrados</Cell>
          <Cell $col={4} $s={26} $b={13}>=</Cell>
          <Cell $col={5} $s={27.8} $b={11.5} $pr={1} $bg="#ffff00">(fahrenheit</Cell>
          <Cell $col={6} $s={26} $b={16} $n>_</Cell>
          <Cell $col={7} $s={26} $b={11.5} $pl={1}>32</Cell>
          <Cell $col={8} $s={26} $b={11.5} $start $pl={5}>)</Cell>
          <Cell $col={9} $s={34} $b={13}>*</Cell>
          <Cell $col={10} $s={30} $b={12} $pl={6}>5/9</Cell>
        </Line>
        <Line $h={41.5}><RowHead>26</RowHead></Line>
        <Line $h={48}>
          <RowHead $pb={4}>27</RowHead>
          <Cell $col={3} $s={24.3} $b={11} $end $pr={4}>73,9</Cell>
          <Cell $col={4} $s={26} $b={12}>=</Cell>
          <Cell $col={5} $s={29.5} $b={10.5} $end $pr={5} $bg="#d7f0d0">165</Cell>
          <Cell $col={6} $s={26} $b={11.5} $n>_</Cell>
          <Cell $col={7} $s={26} $b={11} $pl={1}>32</Cell>
          <Cell $col={9} $s={34} $b={12.5}>*</Cell>
          <Cell $col={10} $s={31} $b={10} $end $pr={15}>0,56</Cell>
        </Line>
        <Line $h={27}><RowHead>28</RowHead></Line>
        <Line $h={27}><RowHead $on>29</RowHead><Cell $col={5} $s={19} $b={7} $end $pr={3} $n>133</Cell></Line>
        <Line $h={26.5}><RowHead>30</RowHead></Line>
        <Line $h={27}><RowHead>31</RowHead></Line>
        <Line $h={26.5}><RowHead>32</RowHead></Line>
        <Line $h={27}><RowHead>33</RowHead></Line>
        <Overlay $x={588} $y={176} width="163" height="50"><rect x="1.5" y="1.5" width="160.5" height="47.5" fill="none" stroke="#3f9068" strokeWidth="1.3" strokeDasharray="7.5 2.7" /></Overlay>
        <Overlay $x={588} $y={251} width="73" height="31">
          <rect x=".8" y=".8" width="70.5" height="27.5" fill="none" stroke="#3a8a60" strokeWidth="1.3" /><rect x="69.5" y="26.5" width="3.5" height="3.5" fill="#217346" stroke="#fff" strokeWidth=".7" />
          <path d="M42 3.5h3.5v2h2v3.5h-2v2h-3.5v-2h-2V5.5h2z" fill="#fff" stroke="#222" strokeWidth="1.2" />
        </Overlay>
      </SheetMain>
      <VScroll>
        <svg width="6" height="4" viewBox="0 0 6 4"><path d="M0 4H6L3 1z" fill="#c8c8c8" /></svg>
        <Thumb />
        <svg width="6" height="4" viewBox="0 0 6 4"><path d="M0 0H6L3 4z" fill="#c8c8c8" /></svg>
      </VScroll>
    </Sheet>
  );
}

function Apps() {
  return (
    <>
      <TaskApp $w={32}><svg width="11" height="11" viewBox="0 0 11 11" fill="none" stroke="#333"><path d="M.5 0V2.5H7V0M.5 11V8.5H7V11M.5 3.5H7V7.5H.5zM9.7 0V3.5M9.7 6V11" /></svg></TaskApp>
      <TaskApp $w={28} $ml={5} $run>
        <Slot $w={24} $ml={3}><svg width="24" height="20" viewBox="0 0 24 20"><path d="M2.5 17.5L3.5 13.5A7.8 7.8 0 1 1 6.8 16.5z" fill="#f4faf5" stroke="#1f9d55" strokeWidth="1.8" /><path d="M7.5 5.5Q6 7 8.5 10.5Q12 14.5 15 12.5L15.3 11L12.8 9.8L11.6 11Q9.5 10 9.2 8.2L9.9 7.2L9 5z" fill="#1f9d55" /><rect x="11" y="9" width="12.5" height="10.5" rx="5.2" fill="#e2e4de" stroke="#444" strokeWidth=".7" /><text x="17.2" y="17.3" textAnchor="middle" fontFamily="Open Sans" fontWeight="700" fontSize="8" fill="#222">25</text></svg></Slot>
      </TaskApp>
      <TaskApp $w={33} $ml={2}>
        <svg width="17" height="17" viewBox="0 0 17 17"><circle cx="8.5" cy="8.5" r="8" fill="#1b7fd0" /><path d="M.8 7Q2 .5 8.5.5Q16.5 1 16.5 8Q16 11.5 12 11.5Q9.5 11 10.5 8.5Q9.5 4.5 5.5 5Q2 5.2.8 7z" fill="#49c989" /><path d="M.8 7Q2 .5 8.5.5Q13 .8 15 4Q10 2 6 4.5Q2.5 5 .8 7z" fill="#30b6dc" /><rect x="0" y="10" width="9" height="6.5" rx="1" fill="#d98a16" /><path d="M0 10H9V12.5H0z" fill="#55371a" /></svg>
      </TaskApp>
      <TaskApp $w={27} $ml={4} $run>
        <svg width="17" height="17" viewBox="0 0 17 17" fill="none"><ellipse cx="8" cy="5" rx="7.3" ry="4" fill="#f6efec" stroke="#d66" strokeWidth="1.2" transform="rotate(-12 8 5)" /><path d="M4 3.5L12 12M12 2L8.5 12" stroke="#a9b4ba" strokeWidth="1.3" /><ellipse cx="7.5" cy="13" rx="1.8" ry="3" stroke="#267fb0" strokeWidth="1.3" /><ellipse cx="13" cy="10.5" rx="2.8" ry="1.7" stroke="#267fb0" strokeWidth="1.3" /></svg>
      </TaskApp>
      <TaskApp $w={33} $ml={3}>
        <svg width="14" height="16" viewBox="0 0 14 16"><path d="M2 1L8.5 0L5.5 8L8 10L3 12Q0 10 2 7z" fill="#b9cbe2" /><path d="M1 10Q4 7 7 10L12.5 7.5Q14 13 8 15.5Q2 16 1 10z" fill="#7f9bd0" /><path d="M3 11Q7 14 12 9" stroke="#eef4fb" fill="none" strokeWidth="1.3" /></svg>
      </TaskApp>
      <TaskApp $w={28} $ml={3} $run>
        <svg width="16" height="14" viewBox="0 0 16 14"><path d="M0 1Q0 0 1 0H5L6.5 1.5H14V4H0z" fill="#d99b1e" /><path d="M0 3H15V13H0z" fill="#fad15c" /><path d="M2.5 14V8.5Q2.5 7.5 3.5 7.5H12Q13 7.5 13 8.5V14H10.5V10.5H5V14z" fill="#3d91d6" /></svg>
      </TaskApp>
      <TaskApp $w={27} $ml={5.5} $run>
        <svg width="16" height="16" viewBox="0 0 16 16"><circle cx="8" cy="8" r="8" fill="#34a853" /><path d="M1.07 4A8 8 0 0 1 14.93 4H8A4 4 0 0 0 4.5 10z" fill="#ea4335" /><path d="M14.93 4A8 8 0 0 1 8 16L11.46 10A4 4 0 0 0 8 4z" fill="#fbbc05" /><circle cx="8" cy="8" r="4" fill="#fff" /><circle cx="8" cy="8" r="3.1" fill="#4285f4" /></svg>
      </TaskApp>
      <TaskApp $w={27.5} $ml={6} $run>
        <svg width="15" height="15" viewBox="0 0 15 15"><rect width="15" height="15" rx="2.5" fill="#b30b00" /><path d="M3 11.5Q7.5 9 7.3 3.5Q6.8 3 6.7 4.2Q7.5 8.5 12 9.8Q12.5 9 11 8.8Q6 9 3 11.5z" fill="none" stroke="#fff" strokeWidth="1" /></svg>
      </TaskApp>
      <TaskApp $w={32} $ml={3} $run $active><ExcelIcon s={16} /></TaskApp>
    </>
  );
}

export default function App() {
  return (
    <Meeting>
      <Global />
      <MeetingHeader>
        <Warning><OffIcon /></Warning>
        <Presenter><Avatar>R</Avatar><PresenterName>Ruth Vargas (Presentando)</PresenterName></Presenter>
      </MeetingHeader>
      <Stage>
        <Excel>
          <TitleRow />
          <Menu>
            {MENU.map(([t, w, ml, ls, on]) => <MenuItem key={t} $w={w} $ml={ml} $ls={ls} $on={on}>{t}</MenuItem>)}
            <MenuButton $w={70} $ml={333} $bg="#c3c3c3">
              <svg width="8" height="8" viewBox="0 0 8 8" fill="none" stroke="#333" strokeWidth=".8"><path d="M.5.5H7.5V5.5H3.5L1.8 7.3V5.5H.5z" /></svg>
              <Txt $s={8.6} $ls={0.05}>Comentarios</Txt>
            </MenuButton>
            <MenuButton $w={66} $ml={6} $bg="#5dbb82">
              <svg width="9" height="8" viewBox="0 0 9 8" fill="none" stroke="#24452f" strokeWidth=".9"><path d="M2.5 2.5H.6V7.5H7.3V5.5M2.5 5.3Q3 2.5 6 2.3V.6L8.5 3L6 5.3V3.7Q4 3.6 2.5 5.3z" /></svg>
              <Txt $s={8.6} $ls={0.05}>Compartir</Txt><Slot $w={7}><Chev /></Slot>
            </MenuButton>
          </Menu>
          <RibbonRow />
          <FormulaBar>
            <Field $w={68}><Txt $s={8} $f="'Liberation Sans'">H29</Txt><Chev w={6} c="#ddd" /></Field>
            <Slot $w={13}><Dots /></Slot>
            <Field $w={58}>
              <svg width="9" height="8" viewBox="0 0 9 8" stroke="#8c8c8c"><path d="M1 0L8.5 8M8.5 0L1 8" /></svg>
              <svg width="10" height="8" viewBox="0 0 10 8" fill="none" stroke="#8c8c8c"><path d="M0 4.5L3.3 7.5L10 .5" /></svg>
              <Txt $s={12.5} $i $f="'Liberation Serif'">fx</Txt><Chev w={6} c="#aaa" />
            </Field>
            <Field $w={879} $ml={2}><span /><Chev w={6} c="#ddd" /></Field>
          </FormulaBar>
          <Grid />
          <SheetTabs>
            <Slot $w={42} $start><Row $h={20} $pl={10}><svg width="29" height="7" viewBox="0 0 29 7" fill="none" stroke="#999"><path d="M5 .5L2 3.5L5 6.5M24 .5L27 3.5L24 6.5" /></svg></Row></Slot>
            <SheetTab><TabName>Hoja1</TabName></SheetTab>
            <Slot $w={6}><Row $h={19}><Rule $h={12} /></Row></Slot>
            <Slot $w={56}><Row $h={19}><svg width="8" height="8" viewBox="0 0 8 8" stroke="#ddd"><path d="M4 0V8M0 4H8" /></svg></Row></Slot>
            <Slot $w={3} $ml={446}><Row $h={20}><Dots /></Row></Slot>
            <HScroll><svg width="5" height="6" viewBox="0 0 5 6"><path d="M5 0V6L0 3z" fill="#ddd" /></svg><HThumb /></HScroll>
          </SheetTabs>
          <Status>
            <Slot $w={824} $start><Txt $s={6.9} $ls={0.02}>Selecciona el destino y presiona ENTRAR o elige Pegar</Txt></Slot>
            <ViewBtn $on><svg width="9" height="9" viewBox="0 0 9 9" fill="none" stroke="#eee"><path d="M.5.5H8.5V8.5H.5zM3.2 0V9M5.9 0V9M0 3.2H9M0 5.9H9" /></svg></ViewBtn>
            <ViewBtn><svg width="10" height="9" viewBox="0 0 10 9" fill="none" stroke="#ccc"><path d="M.5.5H9.5V8.5H.5zM2.5 0V9M7.5 0V9M4 3H6M4 5.5H6" /></svg></ViewBtn>
          </Status>
          <Taskbar>
            <Slot $w={27} $start><Slot $w={21}><svg width="11" height="11" viewBox="0 0 11 11" fill="#151515"><path d="M0 1.5L4.7.8V5.2H0zM5.3.7L11 0V5.2H5.3zM0 5.8H4.7V10.2L0 9.5zM5.3 5.8H11V11L5.3 10.3z" /></svg></Slot></Slot>
            <TaskSearch>
              <SearchIcon s={11} /><Slot $w={113} $ml={8} $start><Txt $s={9.7}>Escribe aquí para buscar.</Txt></Slot>
              <Slot $w={52} $ml={39}>
                <svg width="52" height="26" viewBox="0 0 52 26"><path d="M0 26Q6 19 27 18Q46 18 52 26z" fill="#dcb88c" /><path d="M7 12L22 8L27 21L11 24z" fill="#eef0ea" stroke="#5c8a63" strokeWidth="1.3" /><path d="M11 14L20 12M12 17L21 15M13 20L22 18" stroke="#9aa" strokeWidth=".7" /><path d="M18 15L26 6" stroke="#f0a63a" strokeWidth="2.5" /><path d="M25 7L27 5" stroke="#df6666" strokeWidth="2.6" /><path d="M34 4Q38-1 42 4" fill="none" stroke="#1c6fcf" strokeWidth="1.5" /><path d="M32 8Q32 3 38 3Q45 3 45 8L46 22Q45 24 39 24Q32 24 31 22z" fill="#1677e8" /><path d="M34 12H43V20H34z" fill="#39a0fa" /><path d="M35 7H42" stroke="#0b4fae" strokeWidth="1.5" /></svg>
              </Slot>
            </TaskSearch>
            <Apps />
          </Taskbar>
        </Excel>
        <Tiles><Tile /><Tile /><Tile /><Tile /></Tiles>
      </Stage>
      <Bubble />
      <Toast>La conexión a Internet es<br />inestable. Obtén ayuda</Toast>
    </Meeting>
  );
}
